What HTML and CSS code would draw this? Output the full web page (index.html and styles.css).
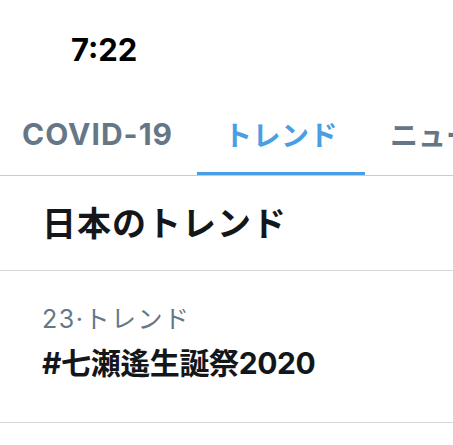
FILE: index.html
```html
<!DOCTYPE html>
<html lang="ja">
<head>
<meta charset="utf-8">
<link rel="stylesheet" href="styles.css">
</head>
<body>
<div class="status"><span class="time">7:22</span></div>
<nav class="tabs">
  <div class="tab first">COVID-19</div>
  <div class="tab active">トレンド</div>
  <div class="tab last">ニュース</div>
</nav>
<section class="heading"><h1>日本のトレンド</h1></section>
<section class="trend">
  <div class="meta">23·トレンド</div>
  <div class="tag">#七瀬遙生誕祭2020</div>
</section>
</body>
</html>
```
FILE: styles.css
```css
html, body {
  margin: 0;
  padding: 0;
  background: #fff;
  width: 453px;
  overflow: hidden;
  font-family: "Inter", "Noto Sans CJK JP", sans-serif;
}
.status {
  height: 100px;
  display: flex;
  align-items: flex-start;
  padding-left: 71px;
  box-sizing: border-box;
  padding-top: 30px;
}
.time {
  font-size: 31px;
  font-weight: 700;
  color: #000;
  line-height: 40px;
}
.tabs {
  display: flex;
  height: 76px;
  border-bottom: 1px solid #c8ccd0;
  box-sizing: border-box;
  white-space: nowrap;
  overflow: hidden;
}
.tab {
  display: flex;
  align-items: center;
  box-sizing: border-box;
  padding-bottom: 4px;
  font-size: 30px;
  font-weight: 700;
  color: #657786;
  border-bottom: 4px solid transparent;
  margin-bottom: -1px;
  flex-shrink: 0;
}
.tab.first {
  width: 197px;
  padding-left: 22px;
  letter-spacing: 1px;
}
.tab.active {
  width: 168px;
  justify-content: center;
  font-size: 28px;
  letter-spacing: 0.5px;
  color: #4a9ee3;
  border-bottom-color: #4a9ee3;
}
.tab.last {
  padding-left: 25px;
  font-size: 28px;
}
.heading {
  height: 95px;
  border-bottom: 1px solid #d6d9dc;
  box-sizing: border-box;
  display: flex;
  align-items: center;
  padding-left: 42px;
  padding-bottom: 4px;
}
.heading h1 {
  margin: 0;
  font-size: 34px;
  font-weight: 700;
  color: #14171a;
  letter-spacing: 1px;
  font-family: "Noto Sans CJK JP", sans-serif;
}
.trend {
  height: 152px;
  border-bottom: 1px solid #d6d9dc;
  box-sizing: border-box;
  padding: 31px 0 0 42px;
}
.meta {
  font-size: 25px;
  color: #657786;
  line-height: 34px;
  letter-spacing: 1.5px;
}
.tag {
  margin-top: 6px;
  font-size: 30px;
  font-weight: 700;
  color: #14171a;
  line-height: 42px;
  letter-spacing: -0.4px;
}
```
